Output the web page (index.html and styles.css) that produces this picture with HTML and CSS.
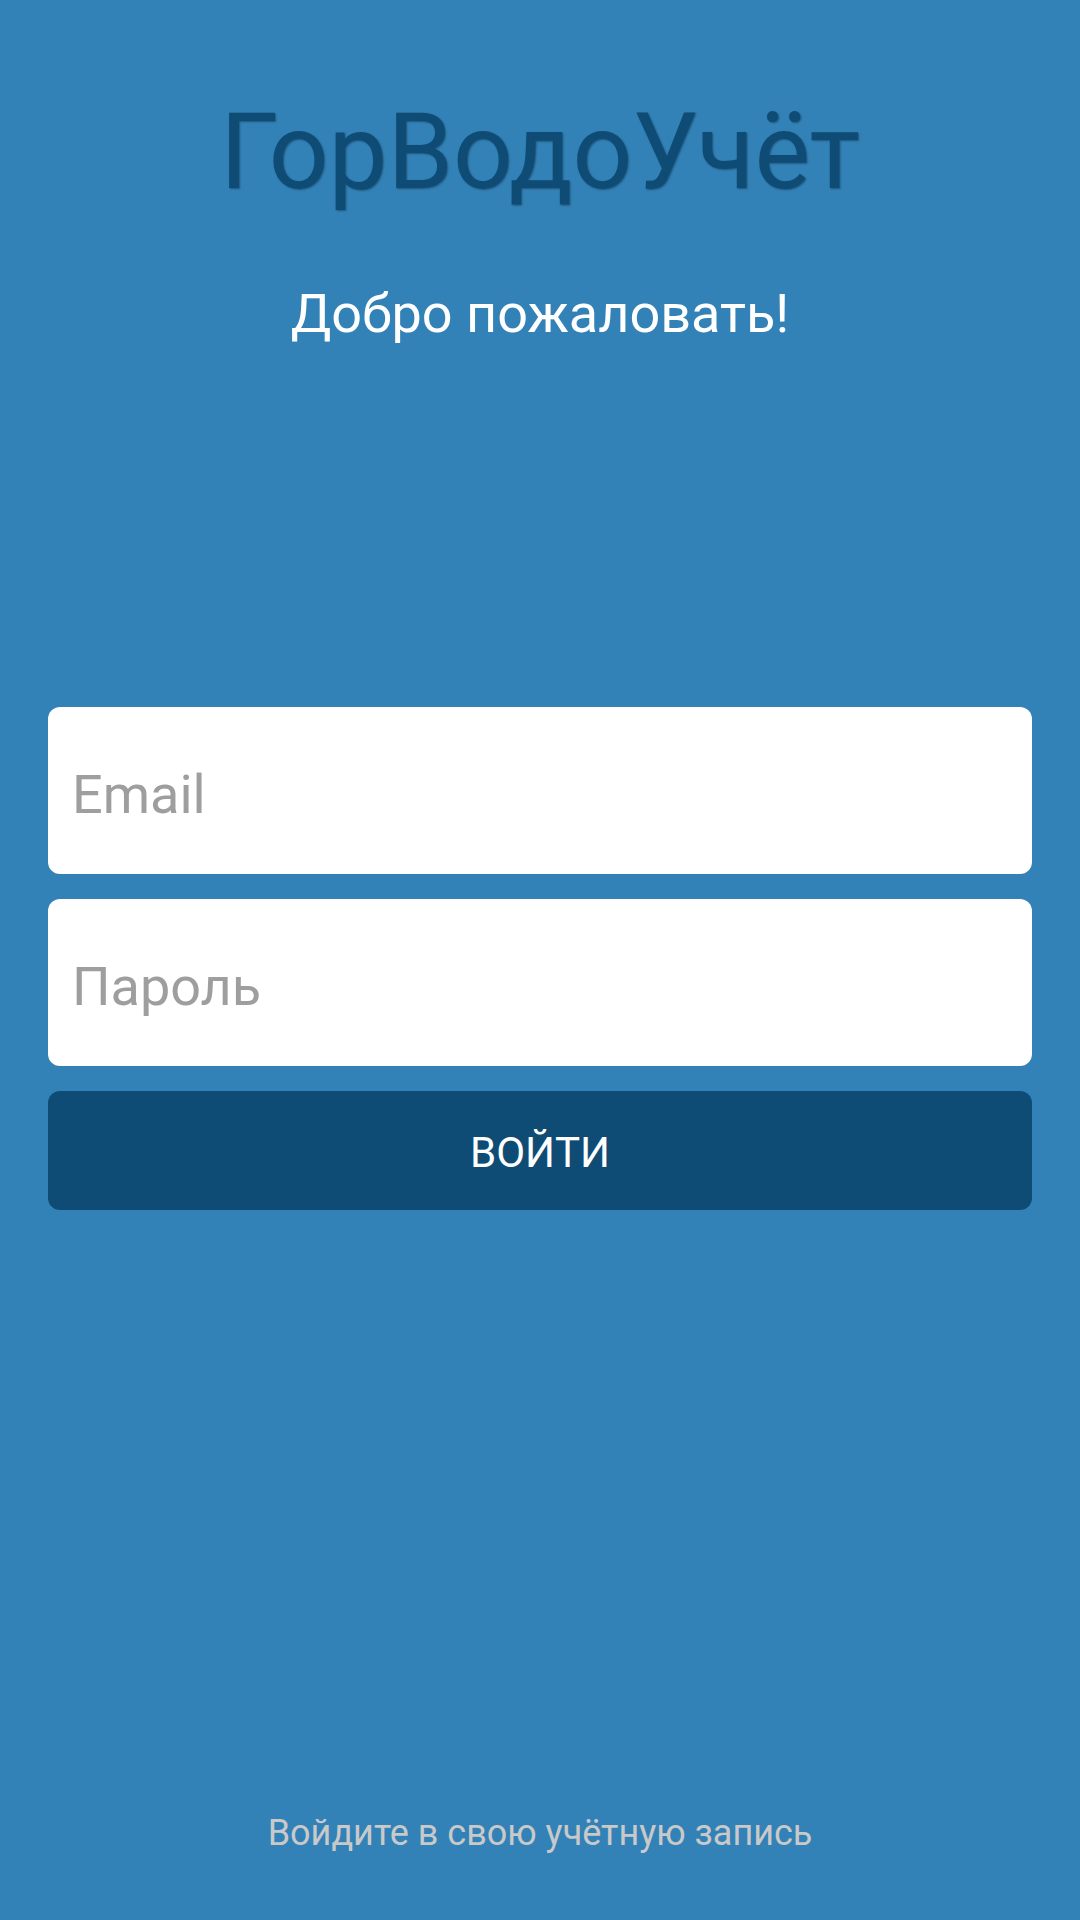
FILE: index.html
```html
<!DOCTYPE html>
<html lang="ru">
<head>
<meta charset="utf-8">
<title>ГорВодоУчёт</title>
<link rel="stylesheet" href="styles.css">
</head>
<body>
<main class="screen">
  <h1 class="title">ГорВодоУчёт</h1>
  <p class="subtitle">Добро пожаловать!</p>
  <form class="form">
    <input class="field" type="email" placeholder="Email">
    <input class="field" type="password" placeholder="Пароль">
    <button class="btn" type="button">ВОЙТИ</button>
  </form>
  <p class="footer">Войдите в свою учётную запись</p>
</main>
</body>
</html>
```

FILE: styles.css
```css
html, body {
  margin: 0;
  padding: 0;
  background: #3282b8;
}
.screen {
  box-sizing: border-box;
  width: 1080px;
  height: 1920px;
  padding: 100px 48px 69px;
  display: flex;
  flex-direction: column;
  font-family: Roboto, "Noto Sans", sans-serif;
}
.title {
  margin: 0;
  font-size: 105px;
  line-height: 105px;
  font-weight: 400;
  color: #0f4c75;
  text-align: center;
  text-shadow: 1px 1px 2px rgba(0, 0, 0, 0.35);
}
.subtitle {
  margin: 82px 0 0;
  font-size: 54px;
  line-height: 54px;
  color: #ffffff;
  text-align: center;
}
.form {
  margin-top: 366px;
  display: flex;
  flex-direction: column;
  gap: 25px;
}
.field {
  box-sizing: border-box;
  height: 167px;
  width: 100%;
  border: none;
  border-radius: 12px;
  background: #ffffff;
  padding: 7px 24px 0;
  font-family: Roboto, "Noto Sans", sans-serif;
  font-size: 54px;
  color: #333333;
  outline: none;
}
.field::placeholder {
  color: #9e9e9e;
}
.btn {
  box-sizing: border-box;
  height: 119px;
  width: 100%;
  border: none;
  border-radius: 12px;
  background: #0f4c75;
  color: #ffffff;
  font-family: Roboto, "Noto Sans", sans-serif;
  font-size: 42px;
  font-weight: 400;
  padding: 4px 0 0;
}
.footer {
  margin: auto 0 0;
  font-size: 36px;
  line-height: 36px;
  color: #c9c9c9;
  text-align: center;
}
```
